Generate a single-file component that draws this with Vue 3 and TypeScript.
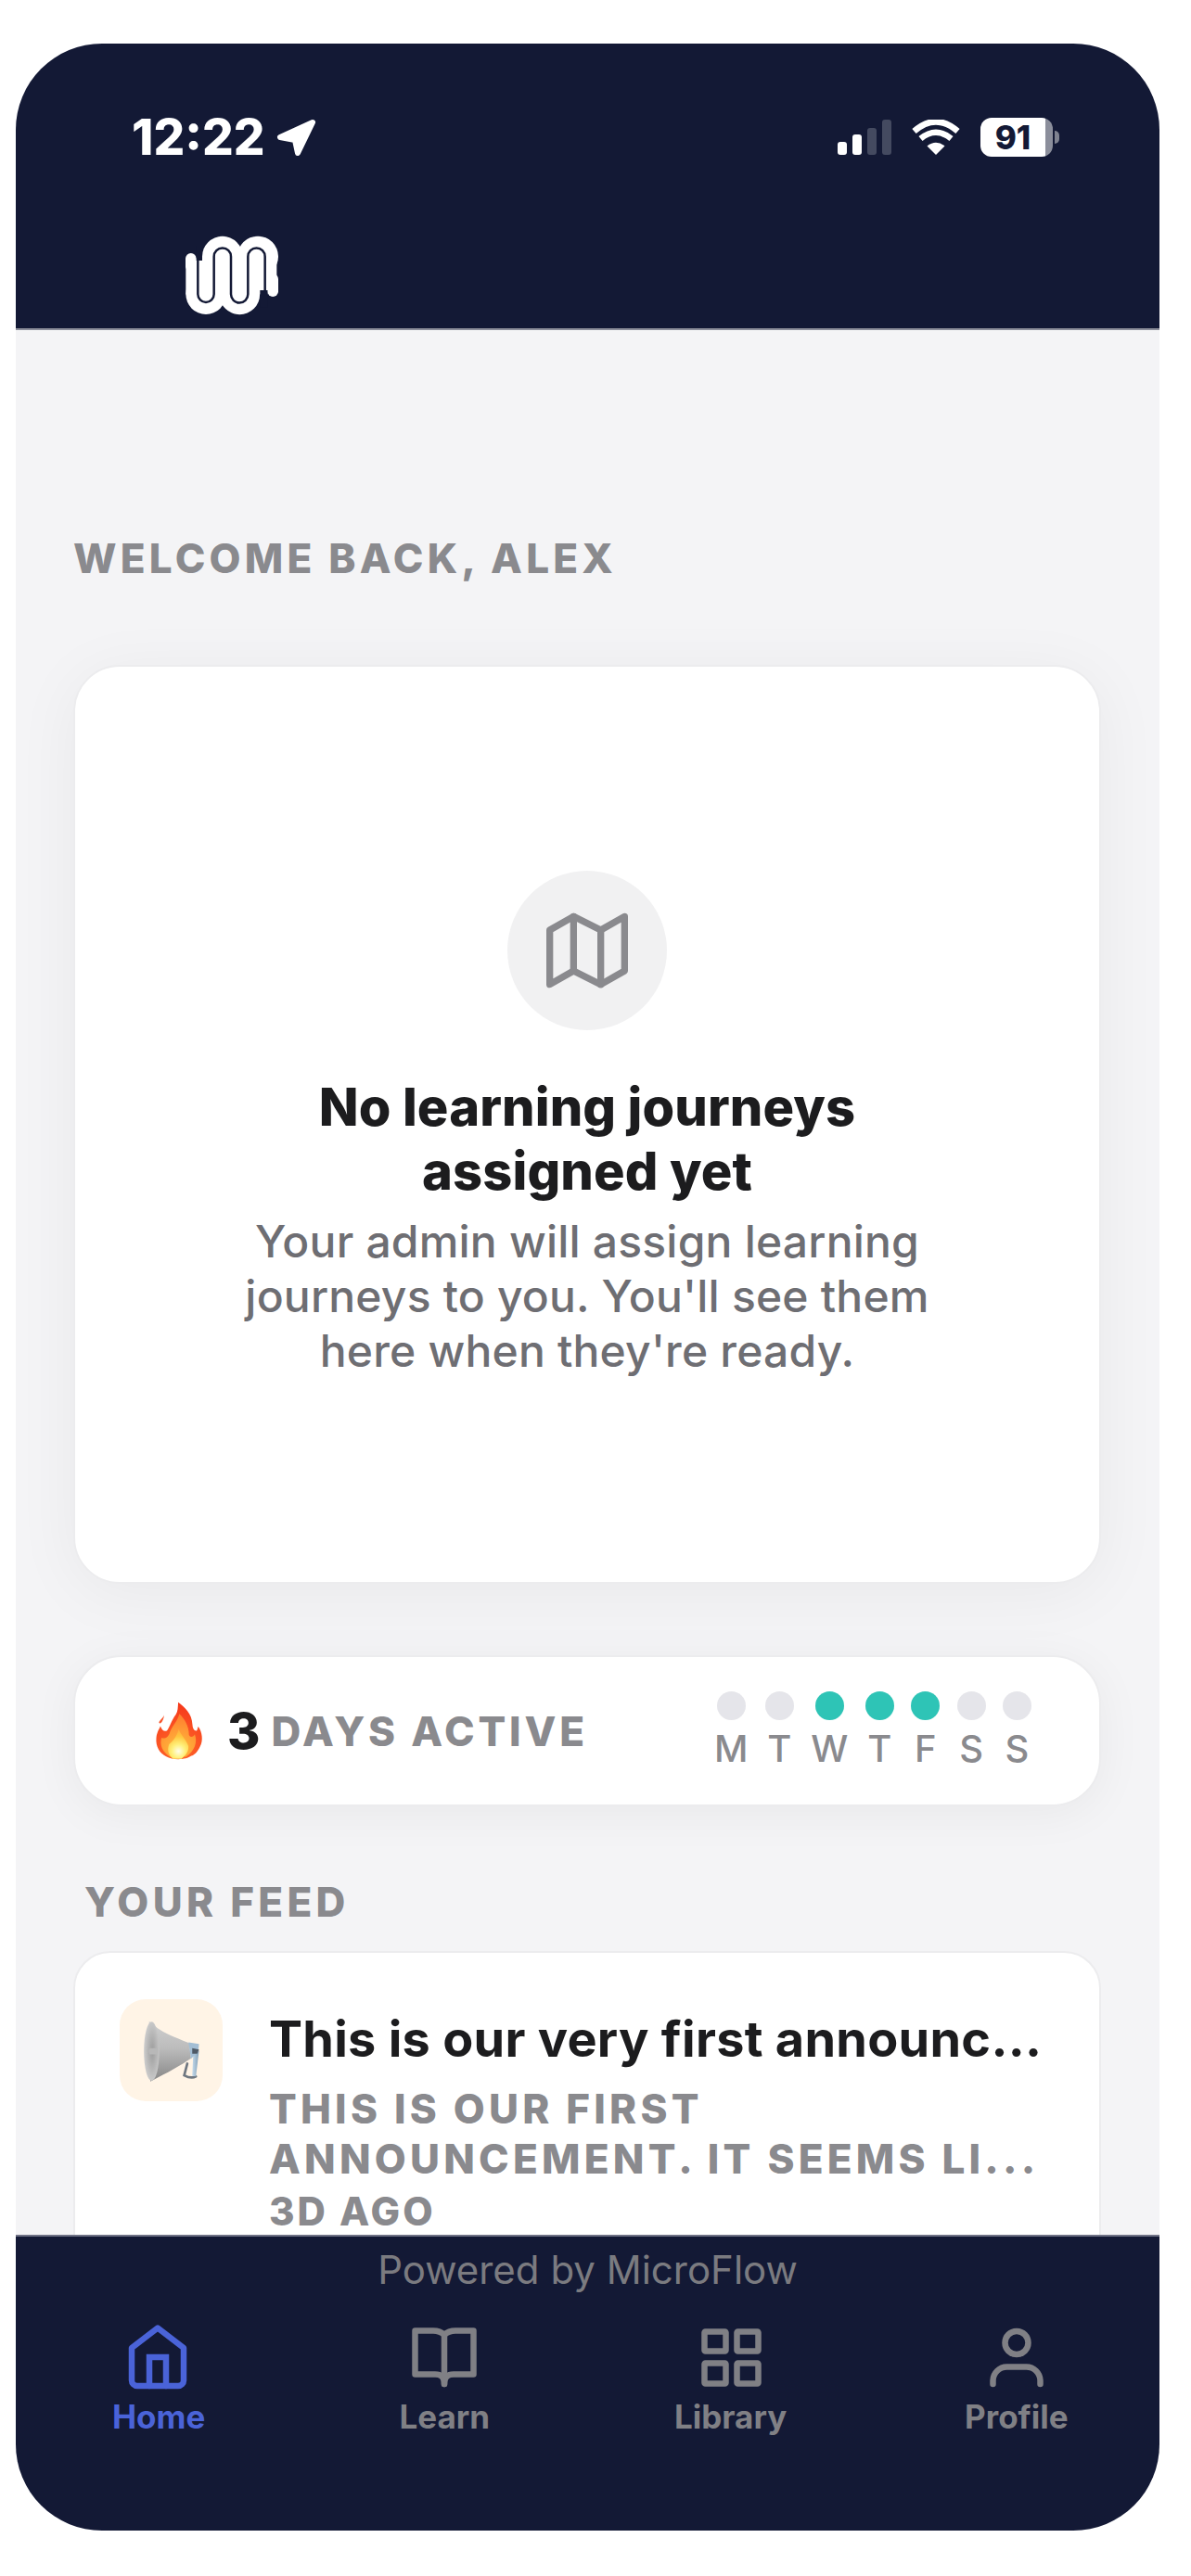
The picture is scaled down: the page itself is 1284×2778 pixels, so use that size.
<script setup lang="ts">
interface Day { letter: string; active: boolean }
interface NavItem { label: string; icon: string; active: boolean }

const days: Day[] = [
  { letter: 'M', active: false },
  { letter: 'T', active: false },
  { letter: 'W', active: true },
  { letter: 'T', active: true },
  { letter: 'F', active: true },
  { letter: 'S', active: false },
  { letter: 'S', active: false },
]

const nav: NavItem[] = [
  { label: 'Home', icon: 'home', active: true },
  { label: 'Learn', icon: 'learn', active: false },
  { label: 'Library', icon: 'library', active: false },
  { label: 'Profile', icon: 'profile', active: false },
]
</script>

<template>
  <div class="phone">
    <header class="header">
      <div class="status">
        <div class="status-left">
          <span class="time">12:22</span>
          <svg class="loc" viewBox="0 0 43 43"><path d="M39 5 L4 21 L20 24 L23 38 Z" fill="#fff" stroke="#fff" stroke-width="6" stroke-linejoin="round" /></svg>
        </div>
        <div class="status-right">
          <div class="signal">
            <i class="bar b1"></i><i class="bar b2"></i><i class="bar b3 dim"></i><i class="bar b4 dim"></i>
          </div>
          <svg class="wifi" viewBox="0 0 52 38">
            <path d="M26 38 L16.500 28.500 Q26 21 35.500 28.500 Z" fill="#fff" />
            <path d="M9.500 20.500 Q26 7 42.500 20.500" fill="none" stroke="#fff" stroke-width="6.500" />
            <path d="M2.500 12.500 Q26 -8 49.500 12.500" fill="none" stroke="#fff" stroke-width="6.500" />
          </svg>
          <div class="battery">
            <div class="batt-body"><span class="batt-num">91</span></div>
            <div class="batt-cap"></div>
          </div>
        </div>
      </div>
      <svg class="logo" viewBox="0 0 360 300">
        <g fill="#fff">
          <rect x="30" y="84" width="35" height="60" rx="17.500" />
          <rect x="295" y="150" width="35" height="75" rx="17.500" />
          <rect x="31" y="108" width="264" height="109" />
          <rect x="84" y="95" width="241" height="109" />
          <circle cx="149.500" cy="95" r="65.500" />
          <circle cx="264" cy="95" r="66" />
          <circle cx="96" cy="217" r="65" />
          <circle cx="205" cy="217" r="65.500" />
        </g>
        <path d="M70 70 V217 A26 26 0 0 0 122 217 V95 A27.500 27.500 0 0 1 177 95 V217 A27.500 27.500 0 0 0 232 217 V95 A27.500 27.500 0 0 1 287 95 V260" fill="none" stroke="#131935" stroke-width="7.500" />
        <path d="M65 60 H72 V100 H65 Z M271 204 H295 V260 H271 Z" fill="#131935" />
      </svg>
    </header>

    <main class="main">
      <div class="welcome">WELCOME BACK, ALEX</div>

      <section class="empty-card">
        <div class="empty-circle">
          <svg class="map" viewBox="0 0 24 24" fill="none" stroke="#8a8a8e" stroke-width="2" stroke-linejoin="round" stroke-linecap="round">
            <path d="M1 6 V22 L8 18 L16 22 L23 18 V2 L16 6 L8 2 Z" />
            <path d="M8 2 V18" />
            <path d="M16 6 V22" />
          </svg>
        </div>
        <h2 class="empty-title">No learning journeys assigned yet</h2>
        <p class="empty-body">Your admin will assign learning journeys to you. You'll see them here when they're ready.</p>
      </section>

      <section class="streak">
        <div class="streak-left">
          <svg class="flame" viewBox="40 20 175 212">
            <defs>
              <radialGradient id="fg" gradientUnits="userSpaceOnUse" cx="124" cy="195" r="150">
                <stop offset="0" stop-color="#ff6a2a" />
                <stop offset="1" stop-color="#f63c1c" />
              </radialGradient>
              <radialGradient id="fm" gradientUnits="userSpaceOnUse" cx="124" cy="190" r="125">
                <stop offset="0.2" stop-color="#ffb03a" />
                <stop offset="1" stop-color="#ff7a2e" />
              </radialGradient>
              <radialGradient id="fi" gradientUnits="userSpaceOnUse" cx="124" cy="196" r="78">
                <stop offset="0" stop-color="#fffde8" />
                <stop offset="0.3" stop-color="#fff07a" />
                <stop offset="0.65" stop-color="#ffc63e" />
                <stop offset="1" stop-color="#ffa63a" />
              </radialGradient>
            </defs>
            <path d="M123 28 C145 45 170 65 172 105 C173 120 180 128 187 125 C190 120 190 115 192 112 C205 130 210 160 198 180 C190 198 178 210 168 212 C150 226 105 228 82 214 C60 205 45 180 48 150 C50 130 58 120 62 110 C68 125 75 130 85 125 C95 110 100 90 115 70 C122 60 122 45 123 28 Z" fill="url(#fg)" />
            <path d="M75 72 C70 85 60 88 57 98 C62 106 73 92 75 72 Z" fill="#f8552c" />
            <path d="M127 68 C145 85 160 110 160 140 C165 150 175 148 180 138 C190 165 180 195 150 215 L95 215 C70 200 58 175 66 150 C75 155 90 150 95 130 C102 110 120 95 127 68 Z" fill="url(#fm)" />
            <path d="M125 120 C130 140 150 155 158 178 C160 195 150 210 135 222 L105 222 C88 208 85 190 92 172 C100 165 118 150 125 120 Z" fill="url(#fi)" />
          </svg>
          <span class="streak-num">3</span>
          <span class="streak-label">DAYS ACTIVE</span>
        </div>
        <div class="days">
          <div v-for="(d, i) in days" :key="i" class="day">
            <span class="dot" :class="{ on: d.active }"></span>
            <span class="day-letter">{{ d.letter }}</span>
          </div>
        </div>
      </section>

      <div class="feed-label">YOUR FEED</div>

      <section class="feed-card">
        <div class="feed-icon">
          <svg class="horn" viewBox="80 70 210 220">
            <defs>
              <linearGradient id="hb" x1="0" y1="0" x2="0" y2="1">
                <stop offset="0" stop-color="#cfcfcf" />
                <stop offset="0.45" stop-color="#bcbcbc" />
                <stop offset="1" stop-color="#868686" />
              </linearGradient>
              <radialGradient id="hf" cx="0.55" cy="0.5" r="0.6">
                <stop offset="0" stop-color="#9c9c9c" />
                <stop offset="1" stop-color="#d2d2d2" />
              </radialGradient>
              <linearGradient id="hh" x1="0" y1="0" x2="1" y2="0">
                <stop offset="0" stop-color="#c6dbeb" />
                <stop offset="1" stop-color="#7f9db5" />
              </linearGradient>
            </defs>
            <path d="M236 222 L226 260 Q248 272 264 264" fill="none" stroke="#6f7780" stroke-width="8" stroke-linecap="round" />
            <path d="M256 176 L252 262 L264 264 L274 180 Z" fill="url(#hh)" />
            <path d="M112 84 C150 122 195 135 242 155 L248 205 C215 228 175 250 116 280 Z" fill="url(#hb)" />
            <ellipse cx="120" cy="182" rx="25" ry="96" fill="url(#hf)" />
            <path d="M114 172 H138 Q144 182 138 192 H114 Q108 182 114 172 Z" fill="#b8b8b8" />
            <path d="M240 153 L274 158 L272 182 L248 206 Z" fill="#a3bed4" />
            <path d="M252 172 L274 176 L268 190 L252 190 Z" fill="#4f5a66" />
          </svg>
        </div>
        <div class="feed-text">
          <div class="feed-title">This is our very first announc...</div>
          <div class="feed-sub">THIS IS OUR FIRST ANNOUNCEMENT. IT SEEMS LI...</div>
          <div class="feed-time">3D AGO</div>
        </div>
      </section>
    </main>

    <footer class="footer">
      <div class="powered">Powered by MicroFlow</div>
      <nav class="tabs">
        <div v-for="item in nav" :key="item.label" class="tab" :class="{ active: item.active }">
          <svg class="tab-icon" viewBox="0 0 80 80" fill="none" stroke="currentColor" stroke-width="6.500" stroke-linejoin="round" stroke-linecap="round">
            <template v-if="item.icon === 'home'">
              <path d="M11 30 L39 8.500 L67 30 V65 A6 6 0 0 1 61 71 H17 A6 6 0 0 1 11 65 Z" />
              <path d="M30 71 V40 H48 V71" stroke-linejoin="miter" />
            </template>
            <template v-else-if="item.icon === 'learn'">
              <path d="M40 16 C37 13 33 11.500 28 11.500 H8.500 V58.500 H30 C35 58.500 40 60 40 69 C40 60 45 58.500 50 58.500 H71.500 V11.500 H52 C47 11.500 43 13 40 16 Z" />
              <path d="M40 16 V69" />
            </template>
            <template v-else-if="item.icon === 'library'">
              <rect x="11.500" y="12.500" width="23" height="21" rx="1" />
              <rect x="46.500" y="12.500" width="23" height="21" rx="1" />
              <rect x="11.500" y="46.500" width="23" height="22" rx="1" />
              <rect x="46.500" y="46.500" width="23" height="22" rx="1" />
            </template>
            <template v-else>
              <circle cx="40" cy="24.500" r="12.500" />
              <path d="M14.500 69 V65 A15 15 0 0 1 29.500 50.500 H50.500 A15 15 0 0 1 65.500 65 V69" />
            </template>
          </svg>
          <span class="tab-label">{{ item.label }}</span>
        </div>
      </nav>
    </footer>
  </div>
</template>

<style>
html, body { background: #fff; }
</style>

<style scoped>
.phone {
  box-sizing: border-box;
  width: 1233px;
  height: 2682px;
  margin: 47px 0 0 17px;
  border-radius: 93px;
  overflow: hidden;
  display: flex;
  flex-direction: column;
  background: #f4f4f6;
  font-family: Inter, "Liberation Sans", sans-serif;
}
.header {
  box-sizing: border-box;
  flex: none;
  height: 309px;
  padding-top: 79px;
  background: #131935;
  border-bottom: 2px solid #8d8f9b;
}
.status {
  display: flex;
  justify-content: space-between;
  align-items: center;
  height: 44px;
  padding: 0 108px 0 125px;
}
.status-left { display: flex; align-items: center; gap: 13px; }
.time { font-size: 53px; font-weight: 800; line-height: 44px; color: #fff; }
.loc { width: 43px; height: 43px; display: block; }
.status-right { display: flex; align-items: center; }
.signal { display: flex; align-items: flex-end; gap: 6px; height: 38px; }
.bar { display: block; width: 10px; border-radius: 3px; background: #fff; }
.b1 { height: 14px; }
.b2 { height: 22px; }
.b3 { height: 29px; }
.b4 { height: 38px; }
.dim { background: #444a60; }
.wifi { width: 52px; height: 38px; display: block; margin-left: 22px; }
.battery { display: flex; align-items: center; margin-left: 22px; }
.batt-body {
  box-sizing: border-box;
  width: 78px;
  height: 42px;
  border-radius: 12px;
  background: linear-gradient(90deg, #fff 0, #fff 70px, #8b8e9b 70px);
  color: #131935;
  display: flex;
  align-items: center;
  justify-content: center;
  padding-right: 8px;
}
.batt-num { font-size: 35px; font-weight: 800; line-height: 42px; }
.batt-cap { width: 5px; height: 14px; margin-left: 2px; border-radius: 0 5px 5px 0; background: #7f8290; }
.logo { display: block; width: 120px; height: 100px; margin: 75px 0 0 173px; }

.main {
  flex: 1;
  min-height: 0;
  overflow: hidden;
  box-sizing: border-box;
  padding: 221px 63px 0 62px;
}
.welcome {
  font-size: 44px;
  line-height: 50px;
  font-weight: 800;
  letter-spacing: 4.200px;
  color: #8a8a8e;
}
.empty-card {
  box-sizing: border-box;
  height: 991px;
  margin-top: 90px;
  padding-top: 220px;
  background: #fff;
  border: 2px solid #ececee;
  border-radius: 50px;
  box-shadow: 0 10px 70px rgba(0, 0, 0, 0.05);
  display: flex;
  flex-direction: column;
  align-items: center;
  text-align: center;
}
.empty-circle {
  width: 172px;
  height: 172px;
  border-radius: 50%;
  background: #f1f1f2;
  display: flex;
  align-items: center;
  justify-content: center;
}
.map { width: 88px; height: 88px; display: block; }
.empty-title {
  width: 760px;
  margin: 49px 0 0;
  font-size: 56px;
  line-height: 69px;
  font-weight: 800;
  letter-spacing: 0.1px;
  color: #1c1c1e;
}
.empty-body {
  width: 840px;
  margin: 11px 0 0;
  font-size: 48px;
  line-height: 59px;
  font-weight: 500;
  letter-spacing: 0.2px;
  color: #6e6e73;
}
.streak {
  box-sizing: border-box;
  height: 163px;
  margin-top: 77px;
  padding: 0 73px 0 85px;
  background: #fff;
  border: 2px solid #ececee;
  border-radius: 52px;
  box-shadow: 0 8px 50px rgba(0, 0, 0, 0.05);
  display: flex;
  align-items: center;
  justify-content: space-between;
}
.streak-left { display: flex; align-items: center; }
.flame { width: 55px; height: 67px; display: block; margin-right: 24px; }
.streak-num { font-size: 54px; font-weight: 800; color: #1c1c1e; line-height: 60px; margin-right: 12px; }
.streak-label { font-size: 44px; font-weight: 800; letter-spacing: 3.800px; color: #8a8a8e; line-height: 50px; }
.days { display: flex; gap: 18.400px; }
.day { display: flex; flex-direction: column; align-items: center; gap: 7px; }
.dot { width: 31px; height: 31px; border-radius: 50%; background: #e5e5ea; }
.dot.on { background: #2ec4b6; }
.day-letter { font-size: 40px; line-height: 48px; font-weight: 500; color: #8a8a8e; }
.feed-label {
  margin: 78px 0 0 12px;
  font-size: 44px;
  line-height: 50px;
  font-weight: 800;
  letter-spacing: 4.300px;
  color: #8a8a8e;
}
.feed-card {
  box-sizing: border-box;
  margin-top: 28px;
  padding: 50px 47px 60px 48px;
  background: #fff;
  border: 2px solid #ececee;
  border-radius: 40px;
  display: flex;
  gap: 50px;
}
.feed-icon {
  flex: none;
  width: 111px;
  height: 110px;
  border-radius: 28px;
  background: #fff4e6;
  display: flex;
  align-items: center;
  justify-content: center;
}
.horn { width: 70px; height: 73px; display: block; }
.feed-text { min-width: 0; flex: 1; padding-top: 12px; }
.feed-title {
  font-size: 54px;
  line-height: 62px;
  font-weight: 700;
  letter-spacing: 0.27px;
  color: #1c1c1e;
  white-space: nowrap;
}
.feed-sub, .feed-time {
  font-weight: 800;
  color: #8a8a8e;
}
.feed-sub { margin-top: 17px; font-size: 44px; line-height: 54px; letter-spacing: 4.200px; }
.feed-time { margin-top: 7px; font-size: 42px; line-height: 46px; letter-spacing: 3px; }
.footer {
  box-sizing: border-box;
  flex: none;
  height: 319px;
  padding-top: 12px;
  background: #131935;
  border-top: 2px solid #6f7285;
  position: relative;
}
.powered {
  text-align: center;
  font-size: 42px;
  line-height: 48px;
  color: #7b7b80;
}
.tabs { display: flex; margin-top: 30px; }
.tab {
  flex: 1;
  display: flex;
  flex-direction: column;
  align-items: center;
  gap: 4px;
  color: #808085;
}
.tab.active { color: #4a63d8; }
.tab-icon { width: 80px; height: 80px; display: block; }
.tab-label { font-size: 35px; line-height: 40px; font-weight: 700; }
</style>
